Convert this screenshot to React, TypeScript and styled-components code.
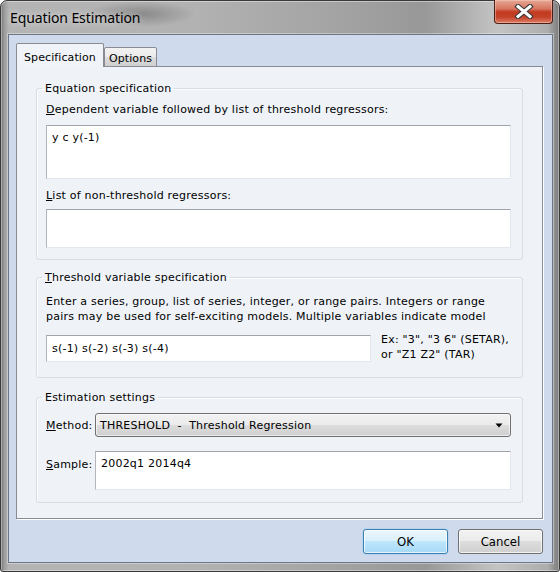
import React from "react";
import styled, { createGlobalStyle } from "styled-components";

const Global = createGlobalStyle`
  html, body { margin: 0; padding: 0; background: #ffffff; }
  body {
    font-family: "DejaVu Sans", Verdana, sans-serif;
    font-size: 11px;
    letter-spacing: 0.22px;
    color: #000;
  }
  * { box-sizing: border-box; }
`;

const Window = styled.div`
  width: 560px;
  height: 572px;
  display: flex;
  flex-direction: column;
  padding: 0 6px 8px 7px;
  border: 1px solid #3a3a3a;
  border-radius: 7px 7px 3px 3px;
  background:
    radial-gradient(ellipse 55px 13px at 140px 13px, rgba(60, 60, 60, 0.35), rgba(60, 60, 60, 0)),
    linear-gradient(90deg, #6f6f6f 0px, #9a9a9a 3px, #b4b4b4 8px, #b2b2b2 35%, #a2a2a2 62%, #989898 76%, #c4c4c4 89%, #adadad 98%, #7a7a7a 100%);
  box-shadow: inset 0 0 0 1px rgba(255, 255, 255, 0.4);
`;

const TitleBar = styled.div`
  height: 33px;
  display: flex;
  justify-content: space-between;
  align-items: flex-start;
  flex-shrink: 0;
`;

const Title = styled.span`
  font-family: "Noto Sans", "Open Sans", sans-serif;
  font-size: 14px;
  letter-spacing: -0.1px;
  line-height: 19px;
  padding: 7px 0 0 2px;
  color: #000;
  text-shadow: 0 0 6px rgba(255, 255, 255, 0.8);
`;

const CloseButton = styled.div`
  width: 59px;
  height: 24px;
  margin-top: -1px;
  display: flex;
  align-items: center;
  justify-content: center;
  border: 1px solid #4a1f17;
  border-top: none;
  border-radius: 0 0 4px 4px;
  background: linear-gradient(180deg, #e6a896 0%, #d77660 38%, #c23a1f 52%, #c5432a 75%, #dd7f66 100%);
  box-shadow: inset 0 0 0 1px rgba(255, 210, 200, 0.45);
`;

const Client = styled.div`
  flex: 1;
  min-height: 0;
  display: flex;
  flex-direction: column;
  padding: 8px 9px 8px 7px;
  background: #cfdbec;
  border: 1px solid #6c7686;
  box-shadow: 0 0 0 1px rgba(255, 255, 255, 0.35);
`;

const TabStrip = styled.div`
  display: flex;
  align-items: flex-end;
  height: 24px;
  margin-bottom: -1px;
  position: relative;
  z-index: 1;
  flex-shrink: 0;
`;

const Tab = styled.div<{ $active?: boolean }>`
  height: ${(p) => (p.$active ? 24 : 20)}px;
  display: flex;
  align-items: flex-end;
  line-height: 13px;
  white-space: nowrap;
  letter-spacing: 0.1px;
  padding: 0 ${(p) => (p.$active ? "7px" : "4px")} ${(p) => (p.$active ? 3 : 1)}px;
  border: 1px solid #898c95;
  border-bottom: ${(p) => (p.$active ? "none" : "1px solid #898c95")};
  border-radius: 2px 2px 0 0;
  background: ${(p) =>
    p.$active
      ? "#f0f4f9"
      : "linear-gradient(180deg, #f2f2f2 0%, #ebebeb 50%, #dddddd 50%, #cfcfcf 100%)"};
`;

const TabPanel = styled.div`
  flex: 1;
  min-height: 0;
  display: flex;
  flex-direction: column;
  padding: 15px 19px 0;
  background: #eff3f8;
  border: 1px solid #898c95;
  box-shadow: 1px 1px 0 #ffffff;
`;

const Group = styled.fieldset<{ $pt: number; $pb: number; $mt?: number }>`
  margin: ${(p) => p.$mt ?? 0}px 0 0;
  min-width: 0;
  padding: ${(p) => p.$pt}px 11px ${(p) => p.$pb}px 9px;
  border: 1px solid #d5dde6;
  border-radius: 3px;
  box-shadow: inset 1px 1px 0 rgba(255, 255, 255, 0.8);
  display: flex;
  flex-direction: column;
`;

const Legend = styled.legend`
  padding: 0 3px;
  margin-left: -4px;
  line-height: 13px;
`;

const FieldLabel = styled.div<{ $mt?: number; $mb?: number }>`
  line-height: 13px;
  margin: ${(p) => p.$mt ?? 0}px 0 ${(p) => p.$mb ?? 0}px;
  white-space: nowrap;
`;

const Key = styled.span`
  text-decoration: underline;
`;

const TextArea = styled.textarea<{ $h: number }>`
  display: block;
  width: 100%;
  height: ${(p) => p.$h}px;
  margin: 0;
  padding: 5px 5px;
  resize: none;
  overflow: hidden;
  font: inherit;
  letter-spacing: inherit;
  line-height: 13px;
  color: #000;
  background: #ffffff;
  border: 1px solid;
  border-color: #a0a3aa #e2e7ee #e2e7ee #b3b6bc;
  outline: none;
`;

const Hint = styled.p`
  margin: 0;
  line-height: 15px;
  white-space: nowrap;
`;

const InputRow = styled.div`
  display: flex;
  align-items: flex-start;
  margin-top: 11px;
`;

const TextInput = styled.input`
  width: 325px;
  height: 27px;
  margin: 0;
  padding: 0 5px;
  font: inherit;
  letter-spacing: inherit;
  line-height: 13px;
  color: #000;
  background: #ffffff;
  border: 1px solid;
  border-color: #a0a3aa #e2e7ee #e2e7ee #b3b6bc;
  outline: none;
`;

const Example = styled.div`
  margin: -3px 0 0 10px;
  line-height: 15px;
  white-space: nowrap;
`;

const SettingsGrid = styled.div`
  display: grid;
  grid-template-columns: 49px 1fr;
  row-gap: 14px;
`;

const GridLabel = styled.div<{ $top?: boolean }>`
  line-height: 13px;
  align-self: ${(p) => (p.$top ? "start" : "center")};
  margin-top: ${(p) => (p.$top ? 7 : 0)}px;
  white-space: nowrap;
`;

const Select = styled.div`
  height: 24px;
  display: flex;
  align-items: center;
  justify-content: space-between;
  padding: 0 7px 0 4px;
  white-space: pre;
  line-height: 13px;
  border: 1px solid #707070;
  border-radius: 3px;
  background: linear-gradient(180deg, #f2f2f2 0%, #ebebeb 50%, #dddddd 50%, #cfcfcf 100%);
  box-shadow: inset 0 0 0 1px rgba(255, 255, 255, 0.6);
`;

const Footer = styled.div`
  display: flex;
  justify-content: flex-end;
  gap: 10px;
  margin-top: 10px;
  flex-shrink: 0;
`;

const Button = styled.button<{ $default?: boolean }>`
  width: 85px;
  height: 25px;
  margin: 0;
  padding: 0;
  font-family: "DejaVu Sans Condensed", "DejaVu Sans", sans-serif;
  font-size: 13px;
  color: #000;
  border-radius: 3px;
  border: 1px solid ${(p) => (p.$default ? "#3c7fb1" : "#707070")};
  background: ${(p) =>
    p.$default
      ? "linear-gradient(180deg, #eaf6fd 0%, #d9f0fc 50%, #bee6fd 50%, #a7d9f5 100%)"
      : "linear-gradient(180deg, #f2f2f2 0%, #ebebeb 50%, #dddddd 50%, #cfcfcf 100%)"};
  box-shadow: inset 0 0 0 1px rgba(255, 255, 255, 0.7)
    ${(p) => (p.$default ? ", 0 0 2px #7fc4ef" : "")};
`;

const CloseGlyph = () => (
  <svg width="20" height="15" viewBox="0 0 20 15">
    <path d="M4 2.5 L16 12.5 M16 2.5 L4 12.5" stroke="#3b3b3b" strokeWidth="5.2" strokeLinecap="square" fill="none" />
    <path d="M4 2.5 L16 12.5 M16 2.5 L4 12.5" stroke="#ffffff" strokeWidth="3" strokeLinecap="square" fill="none" />
  </svg>
);

const DropArrow = () => (
  <svg width="8" height="5" viewBox="0 0 8 5">
    <path d="M0.5 0.5 H7.5 L4 4.5 Z" fill="#000" />
  </svg>
);

export default function App() {
  return (
    <>
      <Global />
      <Window>
        <TitleBar>
          <Title>Equation Estimation</Title>
          <CloseButton>
            <CloseGlyph />
          </CloseButton>
        </TitleBar>
        <Client>
          <TabStrip>
            <Tab $active>Specification</Tab>
            <Tab>Options</Tab>
          </TabStrip>
          <TabPanel>
            <Group $pt={8} $pb={11}>
              <Legend>Equation specification</Legend>
              <FieldLabel $mb={9}>
                <Key>D</Key>ependent variable followed by list of threshold regressors:
              </FieldLabel>
              <TextArea $h={54} readOnly defaultValue="y c y(-1)" />
              <FieldLabel $mt={10} $mb={7}>
                <Key>L</Key>ist of non-threshold regressors:
              </FieldLabel>
              <TextArea $h={39} readOnly defaultValue="" />
            </Group>

            <Group $pt={10} $pb={15} $mt={11}>
              <Legend>
                <Key>T</Key>hreshold variable specification
              </Legend>
              <Hint>
                Enter a series, group, list of series, integer, or range pairs. Integers or range
                <br />
                pairs may be used for self-exciting models. Multiple variables indicate model
              </Hint>
              <InputRow>
                <TextInput readOnly defaultValue="s(-1) s(-2) s(-3) s(-4)" />
                <Example>
                  Ex: "3", "3 6" (SETAR),
                  <br />
                  or "Z1 Z2" (TAR)
                </Example>
              </InputRow>
            </Group>

            <Group $pt={9} $pb={12} $mt={13}>
              <Legend>Estimation settings</Legend>
              <SettingsGrid>
                <GridLabel>
                  <Key>M</Key>ethod:
                </GridLabel>
                <Select>
                  <span>{"THRESHOLD  -  Threshold Regression"}</span>
                  <DropArrow />
                </Select>
                <GridLabel $top>
                  <Key>S</Key>ample:
                </GridLabel>
                <TextArea $h={39} readOnly defaultValue="2002q1 2014q4" />
              </SettingsGrid>
            </Group>
          </TabPanel>
          <Footer>
            <Button $default>OK</Button>
            <Button>Cancel</Button>
          </Footer>
        </Client>
      </Window>
    </>
  );
}
